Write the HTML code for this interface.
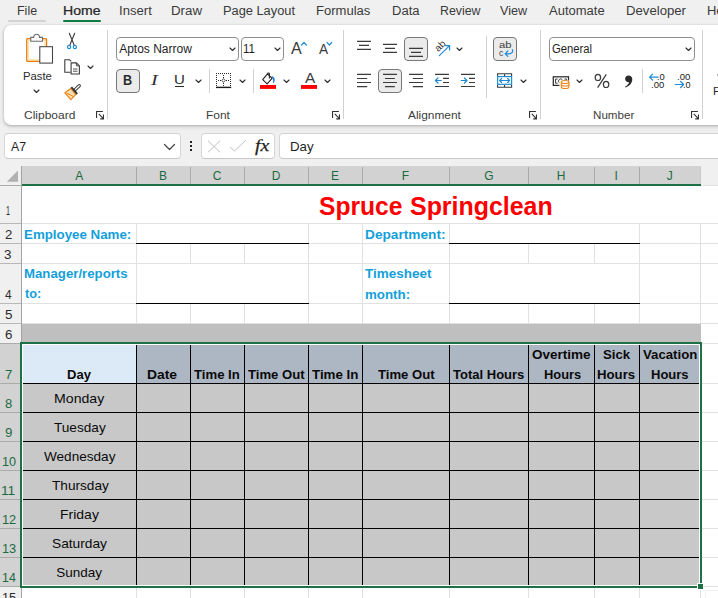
<!DOCTYPE html>
<html><head><meta charset="utf-8"><title>Timesheet - Excel</title>
<style>
*{box-sizing:border-box;margin:0;padding:0}
html,body{width:718px;height:598px;overflow:hidden;background:#f0f0f0}
body{position:relative;font-family:"Liberation Sans",sans-serif;font-size:12px;color:#242424}
.abs,.t,.r{position:absolute}
.t{white-space:nowrap;line-height:1;transform-origin:0 0}
svg{overflow:visible}
</style></head><body>
<span class="t" style="left:17.23px;top:5px;font-size:12px;transform:scaleX(1.0390);color:#3a3a3a;">File</span>
<span class="t" style="left:62.5px;top:5px;font-size:12px;transform:scaleX(1.1723);-webkit-text-stroke:0.22px;color:#262626;">Home</span>
<span class="t" style="left:118.92px;top:5px;font-size:12px;transform:scaleX(1.0922);color:#3a3a3a;">Insert</span>
<span class="t" style="left:171.16px;top:5px;font-size:12px;transform:scaleX(1.1103);color:#3a3a3a;">Draw</span>
<span class="t" style="left:223.2px;top:5px;font-size:12px;transform:scaleX(1.0679);color:#3a3a3a;">Page Layout</span>
<span class="t" style="left:316.28px;top:5px;font-size:12px;transform:scaleX(1.0865);color:#3a3a3a;">Formulas</span>
<span class="t" style="left:391.76px;top:5px;font-size:12px;transform:scaleX(1.0853);color:#3a3a3a;">Data</span>
<span class="t" style="left:439.86px;top:5px;font-size:12px;transform:scaleX(1.0294);color:#3a3a3a;">Review</span>
<span class="t" style="left:499.8px;top:5px;font-size:12px;transform:scaleX(1.0512);color:#3a3a3a;">View</span>
<span class="t" style="left:549.04px;top:5px;font-size:12px;transform:scaleX(1.0835);color:#3a3a3a;">Automate</span>
<span class="t" style="left:626.07px;top:5px;font-size:12px;transform:scaleX(1.0963);color:#3a3a3a;">Developer</span>
<span class="t" style="left:706.61px;top:5px;font-size:12px;color:#3a3a3a;transform:scaleX(1.08);">Help</span>
<div class="r" style="left:8px;top:20px;width:38px;height:2px;background:#d2d2d2;border-radius:1px;"></div>
<div class="r" style="left:63px;top:19.6px;width:38px;height:2.4px;background:#107c41;border-radius:1.2px;"></div>
<div class="abs" style="left:4px;top:25px;width:730px;height:100px;background:#fff;border-radius:7px;box-shadow:0 1px 3px rgba(0,0,0,.22),0 2px 6px rgba(0,0,0,.08),0 0 1px rgba(0,0,0,.18)"></div>
<div class="r" style="left:107px;top:30px;width:1px;height:89px;background:#d1d1d1;"></div>
<div class="r" style="left:343px;top:30px;width:1px;height:89px;background:#d1d1d1;"></div>
<div class="r" style="left:540px;top:30px;width:1px;height:89px;background:#d1d1d1;"></div>
<div class="r" style="left:702px;top:30px;width:1px;height:89px;background:#d1d1d1;"></div>
<div class="r" style="left:486px;top:36px;width:1px;height:62px;background:#d1d1d1;"></div>
<div class="r" style="left:209px;top:69px;width:1px;height:24px;background:#d1d1d1;"></div>
<div class="r" style="left:253px;top:69px;width:1px;height:24px;background:#d1d1d1;"></div>
<div class="r" style="left:642px;top:69px;width:1px;height:24px;background:#d1d1d1;"></div>
<span class="t" style="left:24.36px;top:110px;font-size:11px;transform:scaleX(1.0912);color:#3d3d3d;">Clipboard</span>
<span class="t" style="left:205.51px;top:110px;font-size:11px;transform:scaleX(1.0865);color:#3d3d3d;">Font</span>
<span class="t" style="left:408.13px;top:110px;font-size:11px;transform:scaleX(1.0801);color:#3d3d3d;">Alignment</span>
<span class="t" style="left:592.84px;top:110px;font-size:11px;transform:scaleX(1.0559);color:#3d3d3d;">Number</span>
<svg class="abs" style="left:96.3px;top:110.6px" width="9" height="9" viewBox="0 0 9 9"><path d="M0.55 6.9 V0.55 H6.9" fill="none" stroke="#333" stroke-width="1.1"/><path d="M2.8 2.9 L7.3 7.7 M7.45 3.4 V7.85 H4.2" fill="none" stroke="#333" stroke-width="1.1"/></svg>
<svg class="abs" style="left:331.7px;top:110.6px" width="9" height="9" viewBox="0 0 9 9"><path d="M0.55 6.9 V0.55 H6.9" fill="none" stroke="#333" stroke-width="1.1"/><path d="M2.8 2.9 L7.3 7.7 M7.45 3.4 V7.85 H4.2" fill="none" stroke="#333" stroke-width="1.1"/></svg>
<svg class="abs" style="left:529px;top:110.6px" width="9" height="9" viewBox="0 0 9 9"><path d="M0.55 6.9 V0.55 H6.9" fill="none" stroke="#333" stroke-width="1.1"/><path d="M2.8 2.9 L7.3 7.7 M7.45 3.4 V7.85 H4.2" fill="none" stroke="#333" stroke-width="1.1"/></svg>
<svg class="abs" style="left:691px;top:110.6px" width="9" height="9" viewBox="0 0 9 9"><path d="M0.55 6.9 V0.55 H6.9" fill="none" stroke="#333" stroke-width="1.1"/><path d="M2.8 2.9 L7.3 7.7 M7.45 3.4 V7.85 H4.2" fill="none" stroke="#333" stroke-width="1.1"/></svg>
<span class="t" style="left:22.9px;top:71px;font-size:11px;transform:scaleX(1.0262);color:#2b2b2b;">Paste</span>
<svg class="abs" style="left:33px;top:89.25px" width="7" height="4.5" viewBox="0 0 7 4.5"><path d="M1 1 L3.5 3.5 L6 1" fill="none" stroke="#2f2f2f" stroke-width="1.15" stroke-linecap="round" stroke-linejoin="round"/></svg>
<div class="abs" style="left:116px;top:37px;width:122.5px;height:24px;border:1px solid #8f8f8f;border-radius:4px;background:#fff"></div>
<span class="t" style="left:119.14px;top:43px;font-size:12px;color:#1f1f1f;">Aptos Narrow</span>
<svg class="abs" style="left:229px;top:47.25px" width="7" height="4.5" viewBox="0 0 7 4.5"><path d="M1 1 L3.5 3.5 L6 1" fill="none" stroke="#2f2f2f" stroke-width="1.15" stroke-linecap="round" stroke-linejoin="round"/></svg>
<div class="abs" style="left:241px;top:37px;width:43px;height:24px;border:1px solid #8f8f8f;border-radius:4px;background:#fff"></div>
<span class="t" style="left:243.44px;top:43px;font-size:12px;transform:scaleX(0.9576);color:#1f1f1f;">11</span>
<svg class="abs" style="left:273.8px;top:47.25px" width="7" height="4.5" viewBox="0 0 7 4.5"><path d="M1 1 L3.5 3.5 L6 1" fill="none" stroke="#2f2f2f" stroke-width="1.15" stroke-linecap="round" stroke-linejoin="round"/></svg>
<div class="abs" style="left:549px;top:37px;width:146px;height:24px;border:1px solid #8f8f8f;border-radius:4px;background:#fff"></div>
<span class="t" style="left:552.01px;top:43px;font-size:12px;transform:scaleX(0.9386);color:#1f1f1f;">General</span>
<svg class="abs" style="left:684.8px;top:47.25px" width="7" height="4.5" viewBox="0 0 7 4.5"><path d="M1 1 L3.5 3.5 L6 1" fill="none" stroke="#2f2f2f" stroke-width="1.15" stroke-linecap="round" stroke-linejoin="round"/></svg>
<div class="abs" style="left:116px;top:69px;width:24px;height:24px;border:1px solid #777;border-radius:4px;background:#ebebeb"></div>
<div class="abs" style="left:404px;top:37px;width:24px;height:24px;border:1px solid #777;border-radius:4px;background:#ebebeb"></div>
<div class="abs" style="left:378px;top:69px;width:24px;height:24px;border:1px solid #777;border-radius:4px;background:#ebebeb"></div>
<div class="abs" style="left:493px;top:37px;width:24px;height:24px;border:1px solid #777;border-radius:4px;background:#ebebeb"></div>
<span class="t" style="left:123.45px;top:73px;font-size:14px;transform:scaleX(0.9019);font-weight:bold;color:#2b2b2b;">B</span>
<span class="t" style="left:150.77px;top:74px;font-size:14px;transform:scaleX(1.4267);font-style:italic;font-family:'Liberation Serif',serif;color:#2b2b2b;">I</span>
<span class="t" style="left:173.88px;top:73px;font-size:13.5px;transform:scaleX(1.1126);color:#2b2b2b;">U</span>
<div class="r" style="left:175px;top:86px;width:9px;height:1px;background:#2b2b2b;"></div>
<svg class="abs" style="left:194.9px;top:78.75px" width="7" height="4.5" viewBox="0 0 7 4.5"><path d="M1 1 L3.5 3.5 L6 1" fill="none" stroke="#2f2f2f" stroke-width="1.15" stroke-linecap="round" stroke-linejoin="round"/></svg>
<svg class="abs" style="left:86.9px;top:65.35px" width="7" height="4.5" viewBox="0 0 7 4.5"><path d="M1 1 L3.5 3.5 L6 1" fill="none" stroke="#2f2f2f" stroke-width="1.15" stroke-linecap="round" stroke-linejoin="round"/></svg>
<svg class="abs" style="left:239.1px;top:78.75px" width="7" height="4.5" viewBox="0 0 7 4.5"><path d="M1 1 L3.5 3.5 L6 1" fill="none" stroke="#2f2f2f" stroke-width="1.15" stroke-linecap="round" stroke-linejoin="round"/></svg>
<svg class="abs" style="left:283px;top:78.75px" width="7" height="4.5" viewBox="0 0 7 4.5"><path d="M1 1 L3.5 3.5 L6 1" fill="none" stroke="#2f2f2f" stroke-width="1.15" stroke-linecap="round" stroke-linejoin="round"/></svg>
<svg class="abs" style="left:323.8px;top:78.75px" width="7" height="4.5" viewBox="0 0 7 4.5"><path d="M1 1 L3.5 3.5 L6 1" fill="none" stroke="#2f2f2f" stroke-width="1.15" stroke-linecap="round" stroke-linejoin="round"/></svg>
<svg class="abs" style="left:455.5px;top:47.25px" width="7" height="4.5" viewBox="0 0 7 4.5"><path d="M1 1 L3.5 3.5 L6 1" fill="none" stroke="#2f2f2f" stroke-width="1.15" stroke-linecap="round" stroke-linejoin="round"/></svg>
<svg class="abs" style="left:519.9px;top:78.75px" width="7" height="4.5" viewBox="0 0 7 4.5"><path d="M1 1 L3.5 3.5 L6 1" fill="none" stroke="#2f2f2f" stroke-width="1.15" stroke-linecap="round" stroke-linejoin="round"/></svg>
<svg class="abs" style="left:575.9px;top:78.75px" width="7" height="4.5" viewBox="0 0 7 4.5"><path d="M1 1 L3.5 3.5 L6 1" fill="none" stroke="#2f2f2f" stroke-width="1.15" stroke-linecap="round" stroke-linejoin="round"/></svg>
<svg class="abs" style="left:0;top:0" width="718" height="130" viewBox="0 0 718 130"><rect x="26.8" y="38.7" width="19.7" height="22.6" rx="0.8" fill="#fdfdfd" stroke="#e87a10" stroke-width="1.4"/><rect x="28.2" y="40.1" width="16.9" height="19.8" fill="none" stroke="#fbdf9f" stroke-width="1.4"/><path d="M30.7 41.2 V37.4 H33.7 a2.9 3.2 0 0 1 5.8 0 H42.5 V41.2 Z" fill="#fafafa" stroke="#6e6e6e" stroke-width="1.1"/><rect x="39.8" y="46.7" width="12.7" height="16.4" fill="#fff" stroke="#444" stroke-width="1.05"/><path d="M69.3 33.2 L74.2 45.3 M74.7 33.2 L69.8 45.3" stroke="#3b3b3b" stroke-width="1.1" fill="none" stroke-linecap="round"/><circle cx="69.1" cy="47" r="1.6" stroke="#1e8bd8" fill="none" stroke-width="1.2"/><circle cx="74.9" cy="47" r="1.6" stroke="#1e8bd8" fill="none" stroke-width="1.2"/><path d="M70.6 72.3 H64.8 V59.8 H69.6 L71.2 61.4" fill="none" stroke="#3b3b3b" stroke-width="1.1" stroke-linejoin="round"/><path d="M71.1 62.9 H76.4 L79.4 65.9 V74 H71.1 Z" fill="#fff" stroke="#3b3b3b" stroke-width="1.1" stroke-linejoin="round"/><path d="M76.4 62.9 V65.9 H79.4" fill="none" stroke="#3b3b3b" stroke-width="0.9"/><path d="M73 69 H77.5 M73 71.2 H77.5" stroke="#3b3b3b" stroke-width="0.9"/><path d="M64.9 92.8 L70.7 88.4 L75.8 94.4 L70.9 99.6 Z" fill="#fbdcae" stroke="#ea861c" stroke-width="1.2" stroke-linejoin="round"/><path d="M66.5 93 L73.6 96.6" stroke="#ea861c" stroke-width="1" fill="none"/><path d="M71.3 87.2 L77.2 94" stroke="#3b3b3b" stroke-width="2"/><path d="M75.2 89.6 L79.2 85.7" stroke="#3b3b3b" stroke-width="3.4" stroke-linecap="round"/><path d="M75.6 89.2 L79.2 85.7" stroke="#fff" stroke-width="1.3" stroke-linecap="round"/><path d="M301.6 45 L304 42.4 L306.4 45" fill="none" stroke="#1e8bd8" stroke-width="1.2" stroke-linecap="round" stroke-linejoin="round"/><path d="M327 42.4 L329.4 45 L331.8 42.4" fill="none" stroke="#1e8bd8" stroke-width="1.2" stroke-linecap="round" stroke-linejoin="round"/><path d="M216 73h1v1h-1zM218 73h1v1h-1zM220 73h1v1h-1zM222 73h1v1h-1zM224 73h1v1h-1zM226 73h1v1h-1zM228 73h1v1h-1zM230 73h1v1h-1zM216 75h1v1h-1zM230 75h1v1h-1zM216 77h1v1h-1zM230 77h1v1h-1zM216 79h1v1h-1zM230 79h1v1h-1zM216 81h1v1h-1zM230 81h1v1h-1zM216 83h1v1h-1zM230 83h1v1h-1zM216 85h1v1h-1zM230 85h1v1h-1zM223 75h1v1h-1zM223 77h1v1h-1zM223 83h1v1h-1zM223 85h1v1h-1zM218 80h1v1h-1zM220 80h1v1h-1zM226 80h1v1h-1zM228 80h1v1h-1z" fill="#2b2b2b"/><path d="M223.5 78.6 L225.2 80.5 L223.5 82.4 L221.8 80.5 Z" fill="none" stroke="#2b2b2b" stroke-width="0.8"/><rect x="216" y="86.7" width="15.2" height="1.4" fill="#1a1a1a"/><path d="M262.7 79.7 L267.5 73.9 L272.1 78.3 L267.1 83.8 Z" fill="#fafafa" stroke="#222" stroke-width="1.1" stroke-linejoin="round"/><path d="M267.6 74.4 V73.8 a0.9 0.9 0 0 1 1.8 0 V78.6" fill="none" stroke="#222" stroke-width="1.05"/><path d="M271.8 76.3 C273.6 76.6 274.7 78.6 274.4 80.4 C274.2 81.6 273.9 82.4 273.4 83 C273.6 80.6 273.2 78.4 271.8 76.3 Z" fill="#1b75d0" stroke="#1b75d0" stroke-width="0.5"/><rect x="260" y="85" width="16" height="3.9" fill="#ff0000"/><rect x="301" y="85" width="16" height="3.9" fill="#ff0000"/><path d="M357.0 41.4 h14 M359.0 45.4 h10 M357.0 49.4 h14" stroke="#3b3b3b" stroke-width="1.1" fill="none"/><path d="M383.0 44.4 h14 M385.0 48.4 h10 M383.0 52.4 h14" stroke="#3b3b3b" stroke-width="1.1" fill="none"/><path d="M409.0 48.4 h14 M411.0 52.4 h10 M409.0 56.4 h14" stroke="#3b3b3b" stroke-width="1.1" fill="none"/><path d="M357.0 74.4 h14.0 M357.0 78.5 h10.2 M357.0 82.5 h14.0 M357.0 86.6 h10.2" stroke="#3b3b3b" stroke-width="1.1" fill="none"/><path d="M383.0 74.4 h14.0 M385.0 78.5 h9.8 M383.0 82.5 h14.0 M385.0 86.6 h9.8" stroke="#3b3b3b" stroke-width="1.1" fill="none"/><path d="M409.0 74.4 h14.0 M412.8 78.5 h10.2 M409.0 82.5 h14.0 M412.8 86.6 h10.2" stroke="#3b3b3b" stroke-width="1.1" fill="none"/><path d="M439.3 55.6 L449.3 45.9 M445.3 45.6 H449.6 V49.9" fill="none" stroke="#1e8bd8" stroke-width="1.2" stroke-linecap="round" stroke-linejoin="round"/><path d="M435.0 74.4 h14 M443.0 78.4 h6 M443.0 82.5 h6 M435.0 86.5 h14" stroke="#3b3b3b" stroke-width="1.1" fill="none"/><path d="M441.2 80.5 h-5.8 M438.0 78 l-2.6 2.5 l2.6 2.5" fill="none" stroke="#1e8bd8" stroke-width="1.2" stroke-linecap="round" stroke-linejoin="round"/><path d="M461.0 74.4 h14 M469.0 78.4 h6 M469.0 82.5 h6 M461.0 86.5 h14" stroke="#3b3b3b" stroke-width="1.1" fill="none"/><path d="M461.2 80.5 h5.8 M464.4 78 l2.6 2.5 l-2.6 2.5" fill="none" stroke="#1e8bd8" stroke-width="1.2" stroke-linecap="round" stroke-linejoin="round"/><path d="M512.4 49.6 C513.2 52.2 511.6 53.8 509 53.8 H505.6 M507.8 51 L505.2 53.8 L507.8 56.4" fill="none" stroke="#1e8bd8" stroke-width="1.2" stroke-linecap="round" stroke-linejoin="round"/><path d="M497.6 76 V73.7 H511.6 V76 M504.6 73.7 V76 M497.6 84.9 V87.2 H511.6 V84.9 M504.6 84.9 V87.2" fill="none" stroke="#3b3b3b" stroke-width="1.1"/><rect x="497.6" y="76.6" width="14" height="7.7" fill="#fff" stroke="#1e8bd8" stroke-width="1.2"/><path d="M499.6 80.5 H509.6 M501.6 78.5 l-2 2 l2 2 M507.6 78.5 l2 2 l-2 2" fill="none" stroke="#1e8bd8" stroke-width="1.1" stroke-linecap="round" stroke-linejoin="round"/><rect x="553.3" y="76.8" width="15.2" height="8.6" fill="#fff" stroke="#2b2b2b" stroke-width="1.25"/><path d="M557.6 79 H555.6 V83.2 H557.6 M562.4 79.6 A2.2 2.2 0 1 0 562.4 82.6 M564.4 79 H566.4 V81" fill="none" stroke="#3b3b3b" stroke-width="1"/><path d="M560.6 81.6 V87.2 a4.4 1.6 0 0 0 8.8 0 V81.6 Z" fill="#fff" stroke="#fff" stroke-width="2.4"/><path d="M561.3 82 V87 a3.8 1.5 0 0 0 7.6 0 V82" fill="#fff" stroke="#ea861c" stroke-width="1.1"/><ellipse cx="565.1" cy="82" rx="3.8" ry="1.5" fill="#fff" stroke="#ea861c" stroke-width="1.1"/><path d="M561.3 84.5 a3.8 1.5 0 0 0 7.6 0" fill="none" stroke="#ea861c" stroke-width="1.1"/><ellipse cx="597.9" cy="77.4" rx="2.7" ry="3.1" fill="none" stroke="#3b3b3b" stroke-width="1.2"/><ellipse cx="606.1" cy="84.4" rx="2.7" ry="3.1" fill="none" stroke="#3b3b3b" stroke-width="1.2"/><path d="M606.3 74.3 L597.6 87.6" stroke="#3b3b3b" stroke-width="1.2"/><path d="M628.6 75.6 a3.3 3.3 0 1 0 0.6 6.5 C628.8 84 627.4 85.6 625 86.8 L625.6 87.4 C629.6 86 632.4 83 632.3 79 C632.2 76.8 630.6 75.6 628.6 75.6 Z" fill="#2b2b2b"/><path d="M649.6 77.2 H658 M652.6 74.2 L649.6 77.2 L652.6 80.2" fill="none" stroke="#1e8bd8" stroke-width="1.2" stroke-linecap="round" stroke-linejoin="round"/><path d="M675.2 84.5 H683.6 M680.6 81.5 L683.6 84.5 L680.6 87.5" fill="none" stroke="#1e8bd8" stroke-width="1.2" stroke-linecap="round" stroke-linejoin="round"/></svg>
<span class="t" style="left:290.98px;top:40px;font-size:17.2px;transform:scaleX(0.9361);color:#3b3b3b;">A</span>
<span class="t" style="left:318.79px;top:43px;font-size:13.8px;transform:scaleX(0.9893);color:#3b3b3b;">A</span>
<span class="t" style="left:304.75px;top:71px;font-size:14.5px;transform:scaleX(1.0614);color:#3b3b3b;">A</span>
<span class="t" style="left:498.87px;top:41px;font-size:9.2px;transform:scaleX(1.2341);color:#3b3b3b;">ab</span>
<span class="t" style="left:499.43px;top:49px;font-size:9.2px;transform:scaleX(0.9348);color:#3b3b3b;">c</span>
<span class="t" style="left:439.9px;top:45.6px;font-size:9.6px;color:#3b3b3b;transform-origin:50% 50%;transform:translate(-50%,-50%) rotate(-45deg) scaleX(1.08)">ab</span>
<span class="t" style="left:656.88px;top:73px;font-size:9px;transform:scaleX(1.0417);color:#222;">.0</span>
<span class="t" style="left:651.22px;top:81px;font-size:9px;transform:scaleX(1.0524);color:#222;">.00</span>
<span class="t" style="left:676.67px;top:73px;font-size:9px;transform:scaleX(1.0622);color:#222;">.00</span>
<span class="t" style="left:683.15px;top:81px;font-size:9px;transform:scaleX(0.9948);color:#222;">.0</span>
<span class="t" style="left:713.1px;top:86px;font-size:11.5px;color:#2b2b2b;">F</span>
<div class="r" style="left:716.6px;top:73.6px;width:2px;height:2.6px;background:#b5b5b5;"></div>
<div class="abs" style="left:3.6px;top:133px;width:177.4px;height:26px;background:#fff;border:1px solid #d6d6d6;border-top-color:#d2d2d2;border-bottom-color:#c8c8c8;border-radius:4px"></div>
<div class="abs" style="left:201px;top:133px;width:74px;height:26px;background:#fff;border:1px solid #d6d6d6;border-top-color:#d2d2d2;border-bottom-color:#c8c8c8;border-radius:4px"></div>
<div class="abs" style="left:279px;top:133px;width:450px;height:26px;background:#fff;border:1px solid #d6d6d6;border-top-color:#d2d2d2;border-bottom-color:#c8c8c8;border-radius:4px"></div>
<span class="t" style="left:11.18px;top:140px;font-size:13px;transform:scaleX(0.9456);color:#1f1f1f;">A7</span>
<span class="t" style="left:289.87px;top:140px;font-size:13px;transform:scaleX(1.0206);color:#1f1f1f;">Day</span>
<svg class="abs" style="left:163px;top:143px" width="13" height="8" viewBox="0 0 13 8"><path d="M1.5 1.5 L6.5 6.5 L11.5 1.5" fill="none" stroke="#444" stroke-width="1.2" stroke-linecap="round" stroke-linejoin="round"/></svg>
<div class="r" style="left:190px;top:141px;width:2px;height:2px;background:#222;"></div>
<div class="r" style="left:190px;top:145px;width:2px;height:2px;background:#222;"></div>
<div class="r" style="left:190px;top:149px;width:2px;height:2px;background:#222;"></div>
<svg class="abs" style="left:207px;top:140px" width="14" height="13" viewBox="0 0 14 13"><path d="M1 0.8 L13 12.2 M13 0.8 L1 12.2" stroke="#c2c2c2" stroke-width="1" fill="none"/></svg>
<svg class="abs" style="left:229px;top:139px" width="18" height="13" viewBox="0 0 18 13"><path d="M1 8 L5.5 12 L17 1" stroke="#c2c2c2" stroke-width="1" fill="none"/></svg>
<span class="t" style="left:255.13px;top:138px;font-size:16.5px;transform:scaleX(1.2031);font-style:italic;-webkit-text-stroke:0.25px;font-family:'Liberation Serif',serif;color:#1f1f1f;">fx</span>
<div class="r" style="left:22px;top:186px;width:700px;height:420px;background:#fff;"></div>
<div class="r" style="left:0px;top:166px;width:21px;height:20px;background:#f0f0f0;"></div>
<div class="r" style="left:21px;top:166px;width:680px;height:18px;background:#d2d2d2;"></div>
<div class="r" style="left:701px;top:166px;width:20px;height:19px;background:#f0f0f0;"></div>
<div class="r" style="left:21px;top:184px;width:680px;height:2px;background:#1e7145;"></div>
<div class="r" style="left:701px;top:185px;width:20px;height:1px;background:#e4e4e4;"></div>
<div class="r" style="left:0px;top:186px;width:21px;height:157px;background:#f0f0f0;"></div>
<div class="r" style="left:0px;top:343px;width:21px;height:244px;background:#d2d2d2;"></div>
<div class="r" style="left:0px;top:587px;width:21px;height:20px;background:#f0f0f0;"></div>
<div class="r" style="left:21px;top:166px;width:1px;height:450px;background:#a3a3a3;"></div>
<div class="r" style="left:0px;top:185px;width:21px;height:1px;background:#ababab;"></div>
<div class="r" style="left:136px;top:167px;width:1px;height:17px;background:#ababab;"></div>
<div class="r" style="left:190px;top:167px;width:1px;height:17px;background:#ababab;"></div>
<div class="r" style="left:244px;top:167px;width:1px;height:17px;background:#ababab;"></div>
<div class="r" style="left:308px;top:167px;width:1px;height:17px;background:#ababab;"></div>
<div class="r" style="left:362px;top:167px;width:1px;height:17px;background:#ababab;"></div>
<div class="r" style="left:449px;top:167px;width:1px;height:17px;background:#ababab;"></div>
<div class="r" style="left:528px;top:167px;width:1px;height:17px;background:#ababab;"></div>
<div class="r" style="left:594px;top:167px;width:1px;height:17px;background:#ababab;"></div>
<div class="r" style="left:639px;top:167px;width:1px;height:17px;background:#ababab;"></div>
<div class="r" style="left:700px;top:167px;width:1px;height:17px;background:#c8c8c8;"></div>
<div class="r" style="left:0px;top:223px;width:21px;height:1px;background:#b8b8b8;"></div>
<div class="r" style="left:0px;top:243px;width:21px;height:1px;background:#b8b8b8;"></div>
<div class="r" style="left:0px;top:263px;width:21px;height:1px;background:#b8b8b8;"></div>
<div class="r" style="left:0px;top:303px;width:21px;height:1px;background:#b8b8b8;"></div>
<div class="r" style="left:0px;top:323px;width:21px;height:1px;background:#b8b8b8;"></div>
<div class="r" style="left:0px;top:343px;width:21px;height:1px;background:#ababab;"></div>
<div class="r" style="left:0px;top:383px;width:21px;height:1px;background:#ababab;"></div>
<div class="r" style="left:0px;top:412px;width:21px;height:1px;background:#ababab;"></div>
<div class="r" style="left:0px;top:441px;width:21px;height:1px;background:#ababab;"></div>
<div class="r" style="left:0px;top:470px;width:21px;height:1px;background:#ababab;"></div>
<div class="r" style="left:0px;top:499px;width:21px;height:1px;background:#ababab;"></div>
<div class="r" style="left:0px;top:528px;width:21px;height:1px;background:#ababab;"></div>
<div class="r" style="left:0px;top:557px;width:21px;height:1px;background:#ababab;"></div>
<div class="r" style="left:0px;top:586px;width:21px;height:1px;background:#ababab;"></div>
<div class="r" style="left:0px;top:606px;width:21px;height:1px;background:#b8b8b8;"></div>
<svg class="abs" style="left:6px;top:169px" width="13" height="14" viewBox="0 0 13 14"><path d="M12 1.5 V12.7 H0.8 Z" fill="#b1b1b1"/></svg>
<span class="t" style="left:75.16px;top:170px;font-size:12px;color:#1d6a41;">A</span>
<span class="t" style="left:158.94px;top:170px;font-size:12px;color:#1d6a41;">B</span>
<span class="t" style="left:212.77px;top:170px;font-size:12px;color:#1d6a41;">C</span>
<span class="t" style="left:271.63px;top:170px;font-size:12px;color:#1d6a41;">D</span>
<span class="t" style="left:330.94px;top:170px;font-size:12px;color:#1d6a41;">E</span>
<span class="t" style="left:401.76px;top:170px;font-size:12px;color:#1d6a41;">F</span>
<span class="t" style="left:484.13px;top:170px;font-size:12px;color:#1d6a41;">G</span>
<span class="t" style="left:556.63px;top:170px;font-size:12px;color:#1d6a41;">H</span>
<span class="t" style="left:614.56px;top:170px;font-size:12px;color:#1d6a41;">I</span>
<span class="t" style="left:666.84px;top:170px;font-size:12px;color:#1d6a41;">J</span>
<span class="t" style="left:6.32px;top:205px;font-size:12px;transform:scaleX(0.5995);color:#2b2b2b;">1</span>
<span class="t" style="left:4.56px;top:229px;font-size:12px;transform:scaleX(1.0987);color:#2b2b2b;">2</span>
<span class="t" style="left:4.34px;top:249px;font-size:12px;transform:scaleX(1.1151);color:#2b2b2b;">3</span>
<span class="t" style="left:5.42px;top:289px;font-size:12px;transform:scaleX(0.9918);color:#2b2b2b;">4</span>
<span class="t" style="left:4.96px;top:309px;font-size:12px;transform:scaleX(1.1162);color:#2b2b2b;">5</span>
<span class="t" style="left:4.53px;top:329px;font-size:12px;transform:scaleX(1.1121);color:#2b2b2b;">6</span>
<span class="t" style="left:4.63px;top:369px;font-size:12px;transform:scaleX(1.0982);color:#1d6a41;">7</span>
<span class="t" style="left:4.82px;top:398px;font-size:12px;transform:scaleX(1.0847);color:#1d6a41;">8</span>
<span class="t" style="left:4.5px;top:427px;font-size:12px;transform:scaleX(1.1021);color:#1d6a41;">9</span>
<span class="t" style="left:2.14px;top:456px;font-size:12px;transform:scaleX(1.0525);color:#1d6a41;">10</span>
<span class="t" style="left:1.42px;top:485px;font-size:12px;transform:scaleX(1.1452);color:#1d6a41;">11</span>
<span class="t" style="left:2.21px;top:514px;font-size:12px;transform:scaleX(1.0676);color:#1d6a41;">12</span>
<span class="t" style="left:2.21px;top:543px;font-size:12px;transform:scaleX(1.0666);color:#1d6a41;">13</span>
<span class="t" style="left:2.06px;top:572px;font-size:12px;transform:scaleX(1.0318);color:#1d6a41;">14</span>
<span class="t" style="left:2.19px;top:592px;font-size:12px;transform:scaleX(1.0645);color:#2b2b2b;">15</span>
<div class="r" style="left:136px;top:186px;width:1px;height:420px;background:#e1e1e1;"></div>
<div class="r" style="left:190px;top:186px;width:1px;height:420px;background:#e1e1e1;"></div>
<div class="r" style="left:244px;top:186px;width:1px;height:420px;background:#e1e1e1;"></div>
<div class="r" style="left:308px;top:186px;width:1px;height:420px;background:#e1e1e1;"></div>
<div class="r" style="left:362px;top:186px;width:1px;height:420px;background:#e1e1e1;"></div>
<div class="r" style="left:449px;top:186px;width:1px;height:420px;background:#e1e1e1;"></div>
<div class="r" style="left:528px;top:186px;width:1px;height:420px;background:#e1e1e1;"></div>
<div class="r" style="left:594px;top:186px;width:1px;height:420px;background:#e1e1e1;"></div>
<div class="r" style="left:639px;top:186px;width:1px;height:420px;background:#e1e1e1;"></div>
<div class="r" style="left:700px;top:186px;width:1px;height:420px;background:#e1e1e1;"></div>
<div class="r" style="left:22px;top:223px;width:700px;height:1px;background:#e1e1e1;"></div>
<div class="r" style="left:22px;top:243px;width:700px;height:1px;background:#e1e1e1;"></div>
<div class="r" style="left:22px;top:263px;width:700px;height:1px;background:#e1e1e1;"></div>
<div class="r" style="left:22px;top:303px;width:700px;height:1px;background:#e1e1e1;"></div>
<div class="r" style="left:22px;top:323px;width:700px;height:1px;background:#e1e1e1;"></div>
<div class="r" style="left:22px;top:343px;width:700px;height:1px;background:#e1e1e1;"></div>
<div class="r" style="left:22px;top:383px;width:700px;height:1px;background:#e1e1e1;"></div>
<div class="r" style="left:22px;top:412px;width:700px;height:1px;background:#e1e1e1;"></div>
<div class="r" style="left:22px;top:441px;width:700px;height:1px;background:#e1e1e1;"></div>
<div class="r" style="left:22px;top:470px;width:700px;height:1px;background:#e1e1e1;"></div>
<div class="r" style="left:22px;top:499px;width:700px;height:1px;background:#e1e1e1;"></div>
<div class="r" style="left:22px;top:528px;width:700px;height:1px;background:#e1e1e1;"></div>
<div class="r" style="left:22px;top:557px;width:700px;height:1px;background:#e1e1e1;"></div>
<div class="r" style="left:22px;top:586px;width:700px;height:1px;background:#e1e1e1;"></div>
<div class="r" style="left:22px;top:606px;width:700px;height:1px;background:#e1e1e1;"></div>
<div class="r" style="left:22px;top:186px;width:700px;height:37px;background:#fff;"></div>
<div class="r" style="left:137px;top:224px;width:171px;height:19px;background:#fff;"></div>
<div class="r" style="left:450px;top:224px;width:189px;height:19px;background:#fff;"></div>
<div class="r" style="left:137px;top:264px;width:171px;height:39px;background:#fff;"></div>
<div class="r" style="left:450px;top:264px;width:189px;height:39px;background:#fff;"></div>
<div class="r" style="left:22px;top:324px;width:679px;height:19px;background:#bfbfbf;"></div>
<div class="r" style="left:22px;top:344px;width:678px;height:242px;background:#fff;"></div>
<div class="r" style="left:23px;top:345px;width:676px;height:240px;background:#c8c8c8;"></div>
<div class="r" style="left:23px;top:345px;width:676px;height:38px;background:#adb6c3;"></div>
<div class="r" style="left:23px;top:345px;width:113px;height:38px;background:#dce9f7;"></div>
<div class="r" style="left:136px;top:345px;width:1px;height:240px;background:#000;"></div>
<div class="r" style="left:190px;top:345px;width:1px;height:240px;background:#000;"></div>
<div class="r" style="left:244px;top:345px;width:1px;height:240px;background:#000;"></div>
<div class="r" style="left:308px;top:345px;width:1px;height:240px;background:#000;"></div>
<div class="r" style="left:362px;top:345px;width:1px;height:240px;background:#000;"></div>
<div class="r" style="left:449px;top:345px;width:1px;height:240px;background:#000;"></div>
<div class="r" style="left:528px;top:345px;width:1px;height:240px;background:#000;"></div>
<div class="r" style="left:594px;top:345px;width:1px;height:240px;background:#000;"></div>
<div class="r" style="left:639px;top:345px;width:1px;height:240px;background:#000;"></div>
<div class="r" style="left:23px;top:383px;width:676px;height:1px;background:#000;"></div>
<div class="r" style="left:23px;top:412px;width:676px;height:1px;background:#000;"></div>
<div class="r" style="left:23px;top:441px;width:676px;height:1px;background:#000;"></div>
<div class="r" style="left:23px;top:470px;width:676px;height:1px;background:#000;"></div>
<div class="r" style="left:23px;top:499px;width:676px;height:1px;background:#000;"></div>
<div class="r" style="left:23px;top:528px;width:676px;height:1px;background:#000;"></div>
<div class="r" style="left:23px;top:557px;width:676px;height:1px;background:#000;"></div>
<div class="r" style="left:136px;top:243px;width:173px;height:1px;background:#000;"></div>
<div class="r" style="left:449px;top:243px;width:191px;height:1px;background:#000;"></div>
<div class="r" style="left:136px;top:303px;width:173px;height:1px;background:#000;"></div>
<div class="r" style="left:449px;top:303px;width:191px;height:1px;background:#000;"></div>
<div class="r" style="left:20px;top:342px;width:682px;height:2px;background:#1e7145;"></div>
<div class="r" style="left:20px;top:342px;width:2px;height:246px;background:#1e7145;"></div>
<div class="r" style="left:700px;top:342px;width:2px;height:243px;background:#1e7145;"></div>
<div class="r" style="left:20px;top:586px;width:677px;height:2px;background:#1e7145;"></div>
<div class="r" style="left:697px;top:583px;width:7px;height:7px;background:#fff;"></div>
<div class="r" style="left:698px;top:584px;width:5px;height:5px;background:#1e7145;"></div>
<div class="abs" style="left:705px;top:590px;width:16px;height:16px;background:#fff;border:1px solid #f1f1f1"></div>
<span class="t" style="left:319.26px;top:193px;font-size:26px;transform:scaleX(0.9472);font-weight:bold;color:#ff0000;">Spruce</span>
<span class="t" style="left:409.6px;top:193px;font-size:26px;transform:scaleX(0.9587);font-weight:bold;color:#ff0000;">Springclean</span>
<span class="t" style="left:24.44px;top:229px;font-size:12.6px;transform:scaleX(1.0572);font-weight:bold;color:#149fda;">Employee Name:</span>
<span class="t" style="left:24.17px;top:268px;font-size:12.6px;transform:scaleX(1.0501);font-weight:bold;color:#149fda;">Manager/reports</span>
<span class="t" style="left:24.98px;top:288px;font-size:12.6px;transform:scaleX(1.0128);font-weight:bold;color:#149fda;">to:</span>
<span class="t" style="left:365.21px;top:229px;font-size:12.6px;transform:scaleX(1.0861);font-weight:bold;color:#149fda;">Department:</span>
<span class="t" style="left:365.37px;top:268px;font-size:12.6px;transform:scaleX(1.0715);font-weight:bold;color:#149fda;">Timesheet</span>
<span class="t" style="left:365.3px;top:289px;font-size:12.6px;transform:scaleX(1.0571);font-weight:bold;color:#149fda;">month:</span>
<span class="t" style="left:67.04px;top:369px;font-size:12.8px;transform:scaleX(1.0184);font-weight:bold;color:#0a0a0a;">Day</span>
<span class="t" style="left:147.34px;top:369px;font-size:12.8px;transform:scaleX(1.0847);font-weight:bold;color:#0a0a0a;">Date</span>
<span class="t" style="left:193.99px;top:369px;font-size:12.8px;transform:scaleX(1.0275);font-weight:bold;color:#0a0a0a;">Time In</span>
<span class="t" style="left:247.98px;top:369px;font-size:12.8px;transform:scaleX(1.0251);font-weight:bold;color:#0a0a0a;">Time Out</span>
<span class="t" style="left:312.02px;top:369px;font-size:12.8px;transform:scaleX(1.0425);font-weight:bold;color:#0a0a0a;">Time In</span>
<span class="t" style="left:377.7px;top:369px;font-size:12.8px;transform:scaleX(1.0251);font-weight:bold;color:#0a0a0a;">Time Out</span>
<span class="t" style="left:453.24px;top:369px;font-size:12.8px;transform:scaleX(1.0173);font-weight:bold;color:#0a0a0a;">Total Hours</span>
<span class="t" style="left:531.92px;top:349px;font-size:12.8px;transform:scaleX(1.0566);font-weight:bold;color:#0a0a0a;">Overtime</span>
<span class="t" style="left:543.59px;top:369px;font-size:12.8px;transform:scaleX(1.0047);font-weight:bold;color:#0a0a0a;">Hours</span>
<span class="t" style="left:603.46px;top:349px;font-size:12.8px;transform:scaleX(1.0318);font-weight:bold;color:#0a0a0a;">Sick</span>
<span class="t" style="left:597.43px;top:369px;font-size:12.8px;transform:scaleX(1.0305);font-weight:bold;color:#0a0a0a;">Hours</span>
<span class="t" style="left:643.17px;top:349px;font-size:12.8px;transform:scaleX(1.0311);font-weight:bold;color:#0a0a0a;">Vacation</span>
<span class="t" style="left:650.98px;top:369px;font-size:12.8px;transform:scaleX(1.0163);font-weight:bold;color:#0a0a0a;">Hours</span>
<span class="t" style="left:53.94px;top:392px;font-size:13.5px;transform:scaleX(1.0467);color:#0a0a0a;">Monday</span>
<span class="t" style="left:53.8px;top:421px;font-size:13.5px;transform:scaleX(1.0079);color:#0a0a0a;">Tuesday</span>
<span class="t" style="left:43.84px;top:450px;font-size:13.5px;transform:scaleX(1.0055);color:#0a0a0a;">Wednesday</span>
<span class="t" style="left:51.57px;top:479px;font-size:13.5px;transform:scaleX(1.0097);color:#0a0a0a;">Thursday</span>
<span class="t" style="left:59.64px;top:508px;font-size:13.5px;transform:scaleX(1.0364);color:#0a0a0a;">Friday</span>
<span class="t" style="left:51.57px;top:537px;font-size:13.5px;transform:scaleX(1.0171);color:#0a0a0a;">Saturday</span>
<span class="t" style="left:56.18px;top:566px;font-size:13.5px;color:#0a0a0a;">Sunday</span>
</body></html>
